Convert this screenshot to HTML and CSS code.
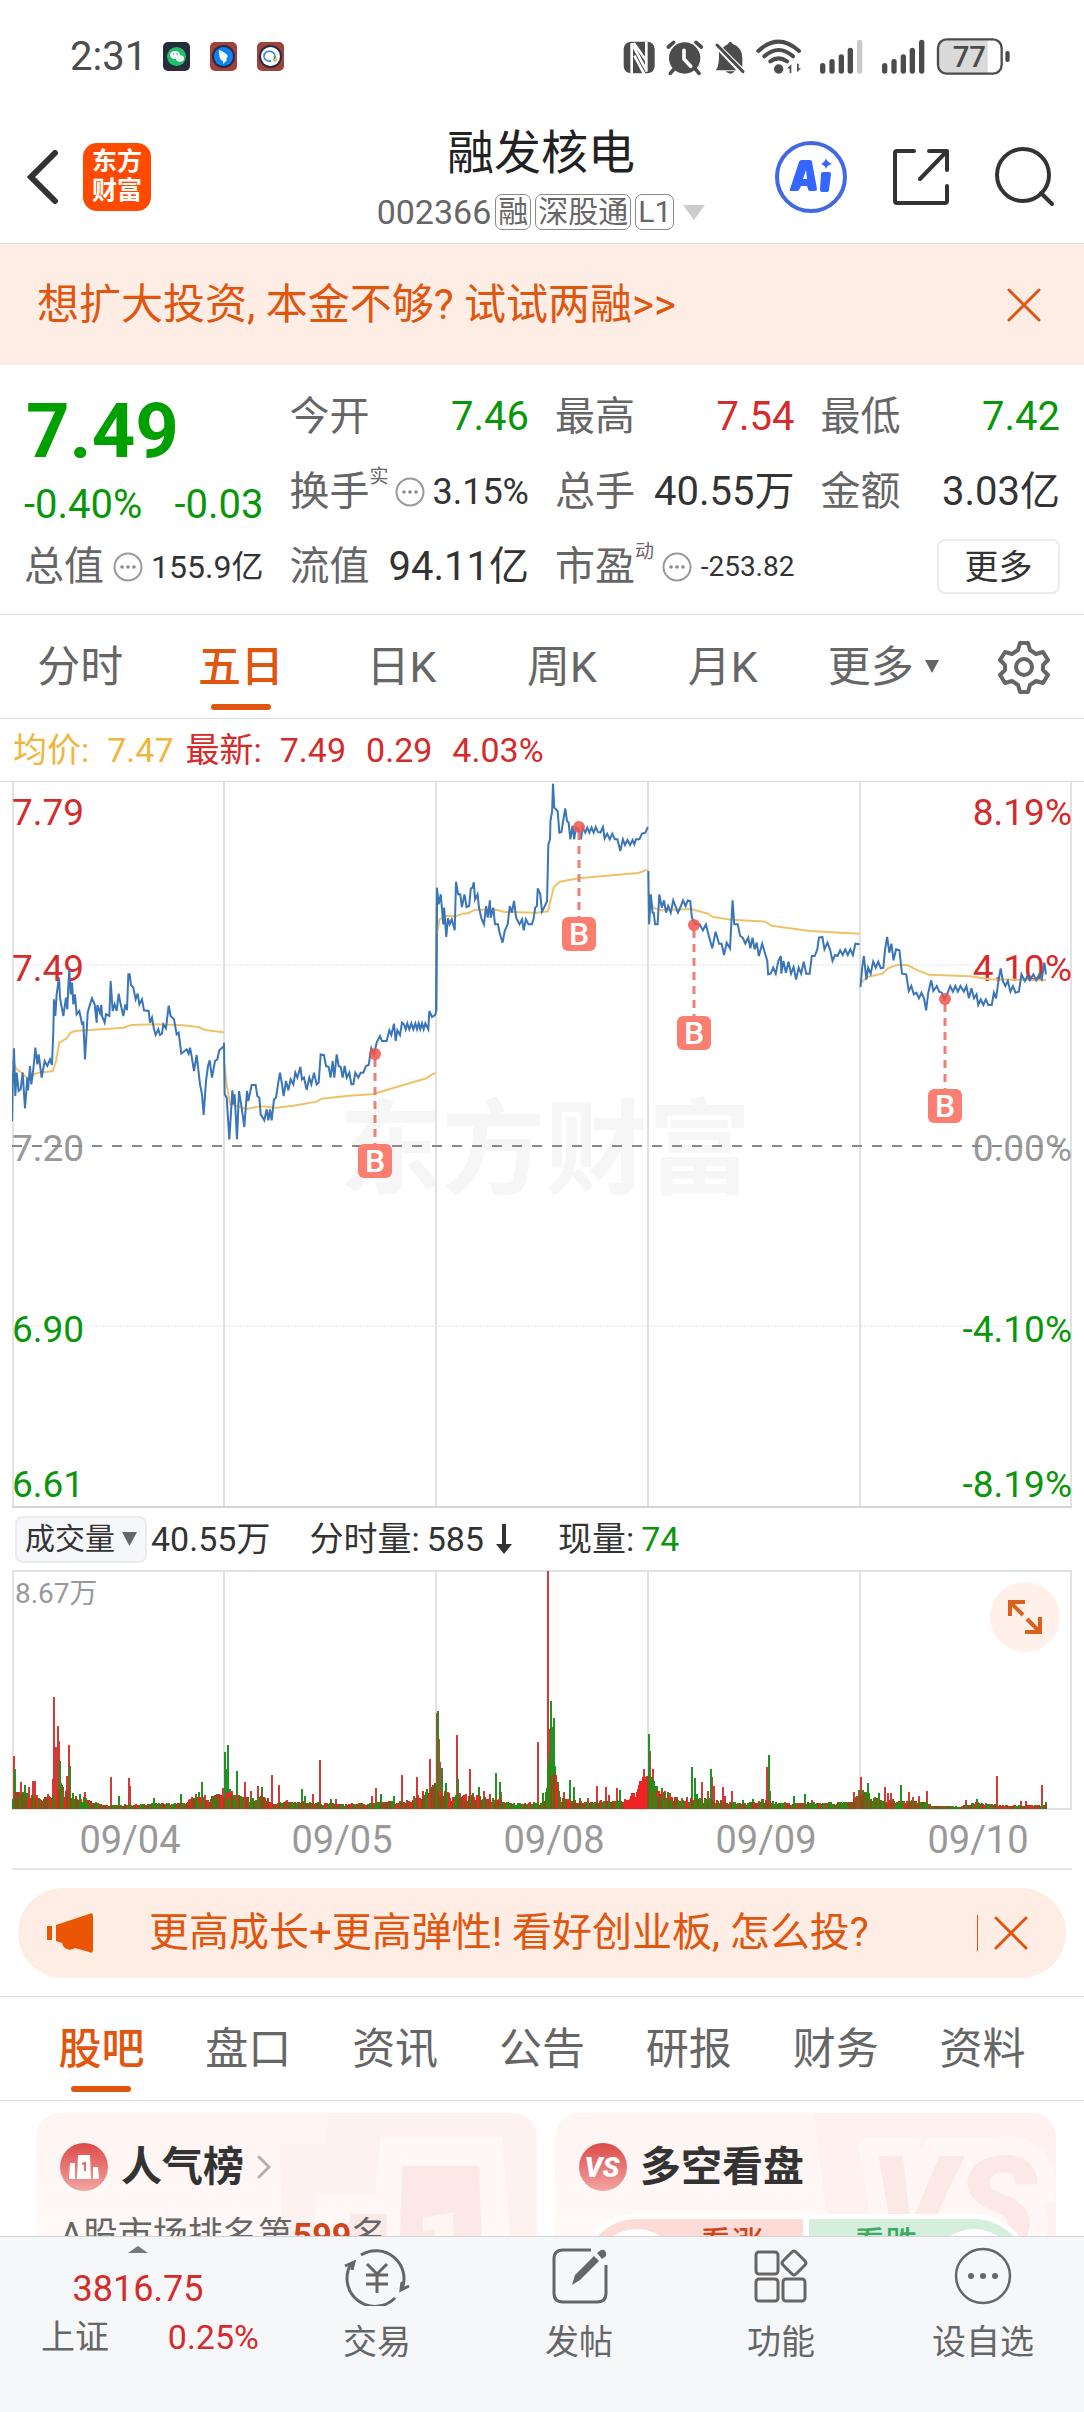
FILE: index.html
```html
<!DOCTYPE html>
<html lang="zh-CN">
<head>
<meta charset="utf-8">
<meta name="viewport" content="width=device-width, initial-scale=1">
<title>融发核电 002366</title>
<link rel="stylesheet" href="styles.css">
</head>
<body>
<div class="app">
  <div class="status">
    <span class="clock">2:31</span>
    <svg class="app-dot" viewBox="0 0 27 29"><rect width="27" height="29" rx="5" fill="#272c3b"/><circle cx="13.500" cy="14.500" r="9.500" fill="#20c06c"/><ellipse cx="12" cy="13" rx="5" ry="4" fill="#fff"/><ellipse cx="17" cy="16.500" rx="4" ry="3.200" fill="#eefaf3"/><circle cx="10.500" cy="12" r=".8" fill="#20c06c"/><circle cx="14" cy="12" r=".8" fill="#20c06c"/></svg>
    <svg class="app-dot" viewBox="0 0 27 29"><rect width="27" height="29" rx="5" fill="#9c443c"/><circle cx="13.500" cy="14.500" r="11.500" fill="#2b2c44"/><circle cx="13.500" cy="14.500" r="9.500" fill="#0f83f5"/><path d="M9 8c3 1 7 3 9 6l-2 3 1 1-4 4 0-3-2-1c-2-3-2-6-2-10z" fill="#fff"/></svg>
    <svg class="app-dot" viewBox="0 0 27 29"><rect width="27" height="29" rx="5" fill="#9c443c"/><circle cx="13.500" cy="14.500" r="11.500" fill="#2b2c44"/><circle cx="13.500" cy="14.500" r="9.500" fill="#fff"/><path d="M17 17a5.500 5 0 1 0-3 2l-4 0" fill="none" stroke="#2c86c8" stroke-width="1.500"/><path d="M17 14l2 2" stroke="#3cae54" stroke-width="2"/><path d="M16 17l2 2 2-2" fill="none" stroke="#e9a13a" stroke-width="1.500"/></svg>
    <svg class="indicators" viewBox="55 45 1170 126" fill="#4c4c4c">
      <rect x="60" y="62" width="93" height="95" rx="22"/>
      <path d="M84 66v92M88 74l40 74M128 62v90M92 104l30 56M90 66l40 56" stroke="#fff" stroke-width="8" fill="none"/>
      <circle cx="243" cy="111" r="47"/>
      <path d="M194 78l16-14M293 78l-16-14M210 145l-10 12M276 145l10 12" stroke="#4c4c4c" stroke-width="11" stroke-linecap="round"/>
      <path d="M241 88v26l20 22" fill="none" stroke="#fff" stroke-width="11" stroke-linecap="round"/>
      <path d="M358 80q8-8 14-10 8-16 16 0 26 8 28 40v28zM346 92l52 56h-62q12-14 10-56zM366 151h28q-14 14-28 0z"/>
      <path d="M340 72l78 80" stroke="#4c4c4c" stroke-width="9" stroke-linecap="round"/>
      <g fill="none" stroke="#4c4c4c" stroke-width="12" stroke-linecap="round"><path d="M464 90q60-56 122 0M482 106q43-38 86 0M500 121q25-18 50 0"/></g>
      <circle cx="525" cy="144" r="14"/><path d="M551 142l12-12v26h-5v-12zM592 142l-12 12v-26h5v14z"/>
      <rect x="649" y="126" width="16" height="32" rx="8"/><rect x="677" y="114" width="16" height="44" rx="8"/><rect x="705" y="100" width="16" height="58" rx="8"/><rect x="732" y="80" width="16" height="78" rx="8"/><rect x="760" y="56" width="16" height="102" rx="8" fill="#c9c9c9"/>
      <rect x="835" y="126" width="16" height="32" rx="8"/><rect x="863" y="114" width="16" height="44" rx="8"/><rect x="891" y="100" width="16" height="58" rx="8"/><rect x="918" y="80" width="16" height="78" rx="8"/><rect x="946" y="56" width="16" height="102" rx="8"/>
      <path d="M1028 58h124v98h-124q-22 0-22-22V80q0-22 22-22z" fill="#dadada"/>
      <rect x="1003" y="55" width="191" height="103" rx="26" fill="none" stroke="#4c4c4c" stroke-width="7"/>
      <rect x="1205" y="90" width="13" height="33" rx="6"/>
      <text x="1097" y="138" font-size="88" font-weight="500" text-anchor="middle">77</text>
    </svg>
  </div>

  <header class="topbar">
    <div class="topbar-left">
      <button class="icon-btn" aria-label="返回"><svg width="32" height="54" viewBox="0 0 32 54" fill="none" stroke="#333" stroke-width="6" stroke-linecap="round"><path d="M28 3L4 27l24 24"/></svg></button>
      <a class="logo" href="#">东方<br>财富</a>
    </div>
    <div class="title-block">
      <h1>融发核电</h1>
      <div class="code-line"><span>002366</span><span class="tag">融</span><span class="tag">深股通</span><span class="tag">L1</span><svg class="caret" width="22" height="15" viewBox="0 0 22 15"><path d="M0 0h22L11 15z" fill="#ccc"/></svg></div>
    </div>
    <div class="topbar-right">
      <button class="icon-btn" aria-label="AI"><svg width="72" height="72" viewBox="0 0 72 72"><circle cx="36" cy="36" r="34" fill="none" stroke="#4169e1" stroke-width="4"/><path d="M26 19h9q2 0 2 2l5 27q0 2-2 2h-5q-2 0-2-2l-1-3h-6l-2 4q0 1-2 1h-6q-2 0-1-2l9-27q1-2 2-2zM31 29l-3 9h4z" fill="#3566ff"/><path d="M48 31h6q2 0 2 2l-2 16q0 2-2 2h-5q-2 0-2-2l1-16q0-2 2-2zM51 17q1 4 6 6-5 1-6 5-1-4-5-5 4-2 5-6z" fill="#3566ff"/></svg></button>
      <button class="icon-btn" aria-label="分享"><svg width="58" height="58" viewBox="0 0 58 58" fill="none" stroke="#333" stroke-width="4" stroke-linecap="round" stroke-linejoin="round"><path d="M22 3H5q-2 0-2 2v48q0 2 2 2h48q2 0 2-2V38M37 3h18v19M55 3L28 31"/></svg></button>
      <button class="icon-btn" aria-label="搜索"><svg width="60" height="60" viewBox="0 0 60 60" fill="none" stroke="#333" stroke-width="4" stroke-linecap="round"><circle cx="28" cy="28" r="26"/><path d="M46 46l11 11"/></svg></button>
    </div>
  </header>

  <main class="scroll">
    <div class="banner"><a href="#">想扩大投资, 本金不够? 试试两融&gt;&gt;</a>
      <button class="icon-btn" aria-label="关闭"><svg width="34" height="34" viewBox="0 0 34 34" stroke="#e0560f" stroke-width="3" stroke-linecap="round"><path d="M2 2l30 30M32 2L2 32"/></svg></button>
    </div>

    <section class="quote">
      <div class="price"><strong>7.49</strong><div class="change"><span>-0.40%</span><span>-0.03</span></div></div>
      <div class="cell"><span>今开</span><b class="down">7.46</b></div>
      <div class="cell"><span>最高</span><b class="up">7.54</b></div>
      <div class="cell"><span>最低</span><b class="down">7.42</b></div>
      <div class="cell"><span>换手<sup>实</sup></span><svg class="info" viewBox="0 0 30 30"><use href="#more-dots"/></svg><b class="mid">3.15%</b></div>
      <div class="cell"><span>总手</span><b>40.55万</b></div>
      <div class="cell"><span>金额</span><b>3.03亿</b></div>
      <div class="cell"><span>总值</span><svg class="info" viewBox="0 0 30 30"><g id="more-dots"><circle cx="15" cy="15" r="13.500" fill="none" stroke="#999" stroke-width="2"/><circle cx="9" cy="15" r="1.800" fill="#888"/><circle cx="15" cy="15" r="1.800" fill="#888"/><circle cx="21" cy="15" r="1.800" fill="#888"/></g></svg><b class="small">155.9亿</b></div>
      <div class="cell"><span>流值</span><b>94.11亿</b></div>
      <div class="cell"><span>市盈<sup>动</sup></span><svg class="info" viewBox="0 0 30 30"><use href="#more-dots"/></svg><b class="tiny">-253.82</b></div>
      <div class="cell"><button class="more">更多</button></div>
    </section>

    <nav class="tabs periods">
      <button>分时</button><button class="on">五日</button><button>日K</button><button>周K</button><button>月K</button>
      <button>更多<svg width="14" height="13" viewBox="0 0 14 13"><path d="M0 0h14L7 13z" fill="#666"/></svg></button>
      <button class="gear" aria-label="设置"><svg width="52" height="54" viewBox="0 0 52 54" fill="none" stroke="#666" stroke-width="4" stroke-linejoin="round"><path d="M22 3h8l2 7 6 4 7-2 5 8-5 5v5l5 5-5 8-7-2-6 4-2 7h-8l-2-7-6-4-7 2-5-8 5-5v-5l-5-5 5-8 7 2 6-4z"/><circle cx="26" cy="27" r="8"/></svg></button>
    </nav>

    <div class="legend">
      <span class="avg"><span>均价:</span><span>7.47</span></span>
      <span class="last"><span>最新:</span><span>7.49</span></span><span class="up">0.29</span><span class="up">4.03%</span>
    </div>

    <div class="plot">
      <svg class="price-chart" viewBox="0 0 1060 726" role="img" aria-label="五日走势">
        <text class="watermark" x="533" y="404">东方财富</text>
        <path class="grid" d="M1 0V726M212 0V726M424 0V726M636 0V726M848 0V726M1059 0V726"/>
        <path class="dotted" d="M0 183H1060M0 544H1060"/>
        <path class="frame" d="M0 725H1060"/>
        <g class="axis up-fill"><text x="0" y="43">7.79</text><text x="0" y="199">7.49</text></g>
        <g class="axis flat-fill"><text x="0" y="379">7.20</text></g>
        <g class="axis down-fill"><text x="0" y="560">6.90</text><text x="0" y="715">6.61</text></g>
        <g class="axis end up-fill"><text x="1060" y="43">8.19%</text><text x="1060" y="199">4.10%</text></g>
        <g class="axis end flat-fill"><text x="1060" y="379">0.00%</text></g>
        <g class="axis end down-fill"><text x="1060" y="560">-4.10%</text><text x="1060" y="715">-8.19%</text></g>
        <path class="zero" d="M0 364H1060"/>
        <g transform="translate(-12 -71) scale(.33333)">
          <polyline class="mean" points="38,1050 50,1075 65,1085 80,1100 95,1098 106,1087 158,1080 168,1050 178,995 200,982 212,965 225,960 370,950 395,942 460,940 540,942 595,948 615,957 671,964"/>
          <polyline class="mean" points="673,1060 680,1120 690,1180 740,1194 780,1186 830,1190 880,1184 950,1172 965,1163 1040,1155 1120,1149 1160,1137 1210,1122 1280,1102 1296,1090 1307,1087"/>
          <polyline class="line" points="36,1230 38,1130 42,1012 46,1155 50,1085 56,1140 62,1135 68,1085 75,1192 82,1100 84,1138 90,1065 94,1120 100,1075 106,1010 112,1060 116,1030 125,1100 134,1050 142,1065 150,1045 156,1062 160,960 162,865 166,915 170,850 177,800 180,860 190,915 198,860 202,895 205,825 208,775 212,850 216,815 220,880 225,850 230,910 238,900 246,938 250,935 255,1045 260,960 263,905 270,880 276,862 284,880 290,935 292,882 300,905 304,882 306,915 314,935 318,910 328,915 332,810 338,900 344,880 350,900 356,848 362,880 370,915 376,880 381,898 385,790 389,790 393,822 400,830 407,865 413,848 418,880 426,865 432,898 446,900 450,935 456,920 462,955 467,972 475,955 480,972 486,968 490,940 498,952 506,884 512,915 522,925 530,970 536,965 544,1028 560,1015 566,1028 570,1010 574,1030 582,1080 590,1032 600,1120 606,1150 611,1212 618,1110 624,1065 629,1048 636,1100 645,1050 652,1045 658,1018 672,1005 672,995 674,1150 680,1160 688,1285 697,1138 701,1180 704,1150 711,1285 717,1140 725,1190 733,1248 741,1140 745,1170 755,1122 767,1122 772,1155 778,1160 782,1210 793,1228 800,1195 805,1228 810,1195 815,1228 822,1165 828,1160 834,1120 840,1085 846,1120 851,1155 858,1110 865,1138 872,1105 880,1120 886,1085 892,1100 901,1068 906,1105 912,1100 920,1136 928,1100 934,1120 942,1085 950,1120 956,1115 962,1030 972,1032 978,1065 986,1068 992,1100 998,1050 1003,1100 1010,1030 1016,1065 1022,1068 1028,1100 1034,1065 1040,1100 1048,1085 1054,1120 1060,1120 1066,1085 1075,1100 1082,1085 1090,1085 1098,1065 1106,1062 1114,1012 1122,1030 1130,995 1140,975 1146,990 1160,990 1168,958 1174,972 1182,938 1187,990 1192,958 1200,972 1206,935 1212,940 1217,955 1222,937 1228,955 1234,937 1240,955 1246,937 1251,955 1256,937 1261,955 1266,937 1271,955 1276,937 1285,955 1288,900 1296,918 1305,912 1309,900 1311,532"/>
        </g>
        <g transform="translate(408 -21) scale(.42354 .33333)">
          <polyline class="mean" points="40,520 46,475 60,465 85,466 100,458 115,456 130,446 180,446 200,453 275,455 302,451 308,420 316,378 330,362 375,352 440,344 515,336 538,326"/>
          <polyline class="mean" points="541,400 550,440 570,448 640,444 680,458 692,468 735,476 815,482 830,494 920,510 1038,518"/>
          <polyline class="mean" points="1041,665 1056,648 1092,638 1105,622 1125,612 1150,612 1175,628 1202,641 1300,646 1345,655 1478,657"/>
          <polyline class="line" points="38,750 40,380 44,430 49,400 55,490 57,440 62,528 66,472 70,490 75,475 82,508 85,362 90,400 95,400 99,438 105,400 110,438 116,435 120,382 124,380 127,364 130,415 136,400 139,438 145,472 151,490 156,435 160,470 165,418 167,470 173,440 177,490 184,490 188,515 195,545 200,510 207,490 212,435 217,455 222,420 227,470 235,490 241,475 245,508 250,475 256,490 264,490 268,475 272,440 276,435 278,382 284,400 288,452 295,435 300,420 303,250 307,235 308,180 312,150 314,68 317,140 325,150 329,215 334,213 338,180 343,142 347,180 351,185 355,235 360,195 364,235 368,200 374,205 380,235 384,200 390,215 395,200 400,215 405,200 410,215 415,198 420,213 426,215 432,198 436,232 442,218 448,235 454,218 460,235 466,235 473,270 479,235 484,252 490,237 496,252 502,237 506,250 510,235 518,235 524,218 532,215 538,198"/>
          <polyline class="line" points="539,330 541,490 545,400 549,455 552,455 555,490 561,490 565,400 571,440 576,418 581,455 586,435 592,455 598,418 604,438 609,455 615,438 621,418 627,435 632,418 638,420 642,470 650,490 660,490 668,508 675,490 682,525 690,562 698,512 706,548 712,548 718,582 724,545 732,562 735,490 738,418 742,490 750,490 756,525 762,530 768,548 775,530 780,562 785,530 790,565 795,545 800,585 808,548 813,570 820,600 822,640 828,638 834,620 840,638 846,600 852,585 853,638 858,600 864,635 870,602 876,638 882,618 888,656 894,620 900,638 906,602 912,638 920,638 925,585 932,585 938,565 942,530 950,528 955,565 962,545 968,565 974,600 980,582 986,585 992,568 998,582 1004,565 1010,582 1016,565 1022,582 1028,548 1038,550"/>
          <polyline class="line" points="1040,678 1044,620 1048,585 1054,656 1058,620 1064,638 1070,602 1076,620 1082,602 1088,622 1094,620 1098,565 1103,528 1108,575 1113,548 1118,598 1124,565 1132,568 1138,638 1148,640 1154,690 1160,675 1166,700 1172,695 1178,712 1184,695 1190,712 1195,748 1200,695 1207,658 1212,690 1220,675 1226,692 1232,695 1238,715 1246,695 1252,675 1258,692 1264,675 1270,692 1276,675 1284,692 1290,675 1296,712 1302,682 1308,712 1314,700 1318,732 1324,715 1330,732 1336,715 1342,732 1350,732 1355,695 1360,712 1366,658 1371,622 1376,660 1382,675 1388,660 1394,692 1400,675 1406,695 1414,692 1420,640 1428,660 1434,645 1440,658 1448,640 1455,658 1462,640 1468,655 1474,605 1478,640"/>
        </g>
        <path class="marker-stem" d="M363 277V363M567 50V136M682 148V235M933 222V308"/>
        <g class="marker-dot"><circle cx="363" cy="272" r="6"/><circle cx="567" cy="45" r="6"/><circle cx="682" cy="143" r="6"/><circle cx="933" cy="217" r="6"/></g>
        <g class="marker-box"><rect x="346" y="362" width="34" height="34" rx="6"/><rect x="550" y="135" width="34" height="34" rx="6"/><rect x="665" y="234" width="34" height="34" rx="6"/><rect x="916" y="307" width="34" height="34" rx="6"/></g>
        <g class="marker-text"><text x="363" y="390">B</text><text x="567" y="163">B</text><text x="682" y="262">B</text><text x="933" y="335">B</text></g>
      </svg>

      <div class="vol-head">
        <label class="picker"><select aria-label="指标"><option>成交量</option></select><svg width="15" height="14" viewBox="0 0 15 14"><path d="M0 0h15L7.500 14z" fill="#666"/></svg></label>
        <span class="total">40.55万</span>
        <span class="pair">分时量:<span>585</span><svg width="16" height="30" viewBox="0 0 16 30"><path d="M8 0v22" stroke="#333" stroke-width="4"/><path d="M0 20h16L8 30z" fill="#333"/></svg></span>
        <span class="pair">现量:<span class="down">74</span></span>
      </div>

      <div class="volume">
        <svg class="vol-chart" id="volume" viewBox="0 0 1060 240" role="img" aria-label="成交量">
          <path class="grid" d="M1 0V240M212 0V240M424 0V240M636 0V240M848 0V240M1059 0V240M0 1H1060M0 239H1060"/>
          <text class="vol-max" x="3" y="33">8.67万</text>
        </svg>
        <button class="expand" aria-label="全屏"><svg width="34" height="34" viewBox="0 0 34 34" fill="none" stroke="#d9611e" stroke-width="4"><path d="M2 16V2h15M2 2l13 13M19 19l12 12M32 17v15H17"/></svg></button>
      </div>
    </div>
    <div class="dates"><span>09/04</span><span>09/05</span><span>09/08</span><span>09/09</span><span>09/10</span></div>

    <div class="promo">
      <svg width="46" height="40" viewBox="0 0 46 40" fill="#ea5504"><path d="M0 13h5v14H0zM9 12L42 1q4-2 4 2v34q0 4-4 2l-14-4q-4 3-8 1-4-1-5-6l-6-2z"/></svg>
      <a href="#">更高成长+更高弹性! 看好创业板, 怎么投?</a>
      <i></i>
      <button class="icon-btn" aria-label="关闭"><svg width="34" height="34" viewBox="0 0 34 34" stroke="#e0560f" stroke-width="3" stroke-linecap="round"><path d="M2 2l30 30M32 2L2 32"/></svg></button>
    </div>

    <nav class="tabs sections">
      <button class="on">股吧</button><button>盘口</button><button>资讯</button><button>公告</button><button>研报</button><button>财务</button><button>资料</button>
    </nav>

    <section class="cards">
      <article class="card">
        <svg class="card-art" viewBox="108 37 1503 371" aria-hidden="true"><path d="M840 130h135l10-93h626v371H845z" fill="#fef2f0"/><path d="M1142 108h364l24 300H940l8-126h177z" fill="#fff8f6"/><path d="M1207 195h230l8 213h-245zM1052 340h108v68h-115z" fill="#fce8e6"/><path d="M1268 350l92-15v73h-55v-23l-37 7z" fill="#fff5f3"/></svg>
        <h2><svg class="badge" viewBox="0 0 48 48"><defs><linearGradient id="red" x2="0" y2="1"><stop offset="0" stop-color="#dc4a48"/><stop offset="1" stop-color="#f2a5a2"/></linearGradient></defs><circle cx="24" cy="24" r="24" fill="url(#red)"/><path d="M10 20h5v16H9zM18 12h12l1 24H17zM33 24h5l1 12h-6z" fill="#fff"/><path d="M22 21l3-1v8" fill="none" stroke="#e26a67" stroke-width="2"/></svg>人气榜<svg width="14" height="24" viewBox="0 0 14 24" fill="none" stroke="#b5b0af" stroke-width="3" stroke-linecap="round"><path d="M2 2l10 10L2 22"/></svg></h2>
        <p>A股市场排名第<strong>599</strong>名</p>
      </article>
      <article class="card">
        <svg class="card-art" viewBox="45 37 1503 371" aria-hidden="true"><path d="M820 37h728v371H870z" fill="#fef1ef"/><text class="vs-art" x="990" y="450">VS</text></svg>
        <h2><svg class="badge" viewBox="0 0 48 48"><circle cx="24" cy="24" r="24" fill="url(#red)"/><text class="vs" x="23" y="34">VS</text></svg>多空看盘</h2>
        <div class="vote"><button class="bull"><i></i>看涨</button><button class="bear">看跌<i></i></button></div>
      </article>
    </section>
  </main>

  <footer class="dock">
    <a class="index" href="#"><svg width="20" height="7" viewBox="0 0 20 7"><path d="M0 7h20L10 0z" fill="#77777b"/></svg><b>3816.75</b><span><em>上证</em><b>0.25%</b></span></a>
    <a href="#"><svg viewBox="0 0 66 60" width="66" height="60" fill="none" stroke="#666" stroke-width="3"><path d="M17 9A28 28 0 0 1 58 43M51 52A28 28 0 0 1 7 18M1 20l9-4-2 8M65 40l-8 4 1-8"/><path d="M23 18l10 10 10-10M33 28v19M22 29h22M22 38h22"/></svg>交易</a>
    <a href="#"><svg viewBox="0 0 60 60" width="60" height="60" fill="none" stroke="#666" stroke-width="3"><path d="M42 4H14q-9 0-9 9v34q0 9 9 9h34q9 0 9-9V19"/><path d="M23 39l3-10L45 10l5 5-19 19z" fill="#666" stroke="none"/><path d="M48 7l4-3q4-1 5 3v3l-4 3z" fill="#666" stroke="none"/></svg>发帖</a>
    <a href="#"><svg viewBox="0 0 60 60" width="60" height="60" fill="none" stroke="#666" stroke-width="3" stroke-linejoin="round"><rect x="5" y="6" width="22" height="22" rx="3"/><rect x="5" y="33" width="22" height="22" rx="3"/><rect x="32" y="33" width="22" height="22" rx="3"/><path d="M41 6q2-2 4 0l9 9q2 2 0 4l-9 9q-2 2-4 0l-9-9q-2-2 0-4z"/></svg>功能</a>
    <a href="#"><svg viewBox="0 0 60 60" width="60" height="60" fill="#666"><circle cx="30" cy="30" r="27" fill="none" stroke="#666" stroke-width="2.500"/><circle cx="18" cy="30" r="3"/><circle cx="30" cy="30" r="3"/><circle cx="42" cy="30" r="3"/></svg>设自选</a>
  </footer>
</div>
<script src="volume.js"></script>
</body>
</html>
```
FILE: styles.css
```css
* { box-sizing: border-box; margin: 0; padding: 0; }
body { font-family: Roboto, "Noto Sans CJK SC", sans-serif; color: #333; background: #fff; }
button, select { font: inherit; color: inherit; background: none; border: 0; }
a { color: inherit; text-decoration: none; }
svg { flex: none; }
.app { height: 100vh; display: flex; flex-direction: column; overflow: hidden; }
.up { color: #d42b2b; }
.down { color: #0a960a; }

.status { flex: none; height: 110px; padding: 3px 72px 0 70px; display: flex; align-items: center; gap: 20px; color: #4c4c4c; }
.clock { margin-right: -4px; font-size: 40px; line-height: 48px; }
.app-dot { width: 27px; height: 29px; }
.indicators { width: 390px; height: 42px; margin-left: auto; }

.topbar { flex: none; min-height: 134px; border-bottom: 1px solid #d9d9d9; padding: 0 29px 0 27px; display: grid; grid-template-columns: 1fr auto 1fr; align-items: center; }
.icon-btn { display: flex; }
.topbar-left { display: flex; align-items: center; gap: 24px; }
.logo { width: 68px; height: 68px; border-radius: 14px; background: #ff4a00; color: #fff; font-size: 25px; font-weight: 700; line-height: 29px; padding: 4px 0; text-align: center; }
.title-block { display: flex; flex-direction: column; align-items: center; gap: 11px; }
.title-block h1 { font-size: 47px; font-weight: 400; line-height: 60px; color: #222; }
.code-line { display: flex; align-items: center; gap: 4px; font-size: 34px; line-height: 36px; color: #666; }
.tag { height: 36px; padding: 0 2px; border: 1px solid #888; border-radius: 7px; font-size: 30px; line-height: 34px; }
.caret { margin-left: 5px; }
.topbar-right { display: flex; align-items: center; justify-content: flex-end; gap: 45px; }

.scroll { flex: 1; min-height: 0; overflow-y: auto; scrollbar-width: none; }
.banner { min-height: 121px; padding: 0 43px 0 37px; background: #fdede4; color: #e0560f; font-size: 42px; line-height: 60px; display: flex; align-items: center; justify-content: space-between; }

.quote { padding: 14px 24px 10px; border-bottom: 1px solid #d9d9d9; display: grid; grid-template-columns: repeat(4, 1fr); grid-template-rows: repeat(3, 75px); column-gap: 26px; }
.price { grid-row: span 2; padding-top: 12px; color: #00a000; }
.price strong { display: block; padding-left: 2px; font-size: 76px; line-height: 80px; }
.change { display: flex; justify-content: space-between; font-size: 40px; line-height: 68px; color: #0a960a; }
.cell { display: flex; align-items: center; justify-content: space-between; font-size: 40px; line-height: 48px; color: #666; white-space: nowrap; }
.cell b { font-weight: 400; }
.cell b:not(.up):not(.down) { color: #333; }
.cell .mid { font-size: 36px; }
.cell .small { font-size: 32px; }
.cell .tiny { font-size: 28px; }
.cell sup { font-size: 19px; line-height: 20px; vertical-align: 22px; }
.info { width: 30px; height: 30px; }
.more { margin-left: auto; width: 123px; height: 55px; border: 2px solid #ebebeb; border-radius: 8px; font-size: 34px; color: #333; }

.tabs { display: grid; border-bottom: 1px solid #d9d9d9; color: #666; }
.tabs button { position: relative; height: 103px; font-size: 43px; line-height: 60px; display: flex; align-items: center; justify-content: center; gap: 11px; }
.tabs .on { color: #e0560f; font-weight: 500; }
.tabs .on::after { content: ""; position: absolute; left: 50%; bottom: 8px; width: 60px; height: 6px; margin-left: -30px; border-radius: 3px; background: #e0560f; }
.periods { grid-template-columns: repeat(6, 4fr) 3fr; }
.sections { grid-template-columns: repeat(7, 1fr); padding: 0 28px; border-top: 1px solid #d9d9d9; }

.legend { height: 63px; padding: 0 13px; border-bottom: 1px solid #d9d9d9; display: flex; align-items: center; gap: 20px; font-size: 34px; line-height: 48px; }
.legend > span { display: flex; gap: 18px; }
.legend .avg { color: #efb63f; margin-right: -8px; }
.legend .last { color: #d42b2b; }

.plot { padding: 0 12px; }
.plot svg { display: block; }
.price-chart, .vol-chart { width: 100%; height: auto; }
.grid { fill: none; stroke: #e2e2e2; stroke-width: 2; }
.dotted { fill: none; stroke: #e4e4e4; stroke-width: 1; stroke-dasharray: 2 1; }
.frame { stroke: #d4d4d4; stroke-width: 2; }
.zero { stroke: #888; stroke-width: 2; stroke-dasharray: 10 10; }
.line { fill: none; stroke: #3a75b8; stroke-width: 2; vector-effect: non-scaling-stroke; }
.mean { fill: none; stroke: #efc269; stroke-width: 2; vector-effect: non-scaling-stroke; }
.axis { font-size: 37px; }
.end { text-anchor: end; }
.up-fill { fill: #d42b2b; }
.down-fill { fill: #0a960a; }
.flat-fill { fill: #999; }
.watermark { font-size: 103px; font-weight: 700; text-anchor: middle; fill: #f6f6f6; }
.marker-stem { stroke: #ec8074; stroke-width: 3; stroke-dasharray: 8 6; }
.marker-dot { fill: #f0544a; opacity: .85; }
.marker-box { fill: #fa7f70; }
.marker-text { fill: #fff; font-size: 32px; font-weight: 500; text-anchor: middle; }

.vol-head { height: 62px; padding-left: 3px; display: flex; align-items: center; font-size: 34px; line-height: 46px; }
.picker { height: 47px; padding: 0 8px; display: flex; align-items: center; gap: 7px; border: 2px solid #ececf0; border-radius: 8px; background: #f6f7f9; font-size: 30px; }
.picker select { width: 90px; appearance: none; }
.total { margin-left: 4px; margin-right: 39px; }
.pair { display: flex; align-items: center; margin-right: 46px; }
.pair span { margin-left: 7px; }
.pair svg { margin-left: 12px; }
.volume { position: relative; }
.vol-max { font-size: 28px; fill: #999; }
.expand { position: absolute; top: 12px; right: 12px; width: 70px; height: 70px; border-radius: 50%; background: #fff1ea; display: flex; align-items: center; justify-content: center; }
.dates { margin: 0 12px; border-bottom: 2px solid #e5e5e5; display: grid; grid-template-columns: repeat(5, 1fr); text-align: center; font-size: 38px; line-height: 58px; color: #999; }
.dates span { padding: 2px 0 0 24px; line-height: 56px; }

.promo { margin: 18px; height: 90px; padding: 0 38px 0 29px; border-radius: 45px; background: #fdede4; color: #e0560f; display: flex; align-items: center; font-size: 40px; line-height: 56px; }
.promo a { margin-left: 56px; margin-right: auto; }
.promo i { width: 1px; height: 36px; margin-right: 16px; background: #e0560f; }

.cards { padding: 12px 28px 28px 36px; display: grid; grid-template-columns: 1fr 1fr; gap: 18px; }
.card { position: relative; height: 250px; padding: 26px 24px; border-radius: 24px; overflow: hidden; background: linear-gradient(#fff5f3, #fffaf8 60%); }
.card-art { position: absolute; top: 0; left: 0; width: 100%; }
.card h2 { position: relative; display: flex; align-items: center; gap: 13px; font-size: 41px; font-weight: 700; line-height: 56px; }
.badge { width: 48px; height: 48px; }
.card p { position: relative; margin-top: 12px; font-size: 35px; line-height: 56px; color: #666; }
.card p strong { color: #d1451b; font-size: 34px; }
.vs { font-size: 28px; font-style: italic; font-weight: 900; text-anchor: middle; fill: #fff; }
.vs-art { font-size: 400px; font-style: italic; font-weight: 900; fill: #fce8e6; stroke: #fff7f5; stroke-width: 110px; paint-order: stroke; }
.vote { position: relative; margin-top: 19px; border: 5px solid #fff; border-radius: 58px; overflow: hidden; display: grid; grid-template-columns: 1fr 1fr; gap: 6px; background: #fff; }
.vote button { height: 106px; padding: 6px 10px 10px; display: flex; justify-content: space-between; font-size: 32px; line-height: 36px; font-weight: 500; }
.vote i { width: 86px; height: 86px; margin-top: 4px; border-radius: 50%; background: #fff; }
.bull { background: #fddcd8; color: #d1451b; }
.bear { background: #d6efdc; color: #3eaa66; }
.vote .bull { padding-right: 39px; }
.vote .bear { padding-left: 45px; }

.dock { flex: none; height: 176px; border-top: 1px solid #d0d4d8; background: #f6f7f9; display: grid; grid-template-columns: 276fr repeat(4, 202fr); color: #666; font-size: 34px; line-height: 48px; }
.dock a { display: flex; flex-direction: column; align-items: center; gap: 12px; padding-top: 9px; }
.dock .index { gap: 0; }
.dock b { font-weight: 400; color: #d42b2b; }
.dock em { font-style: normal; }
.index > b { margin-top: 12px; font-size: 36px; }
.index > span { width: 100%; padding: 0 17px 0 41px; display: flex; justify-content: space-between; }
```
FILE: volume.js
```js
// Minute volume: [x, height] of the taller bars, by direction.
const rise = [[2,53],[9,27],[17,22],[21,28],[23,28],[36,15],[41,30],[42,112],[44,62],[46,83],[47,68],[55,33],[57,64],[73,17],[99,32],[117,31],[118,23],[180,12],[184,15],[193,14],[206,12],[211,21],[220,18],[229,13],[233,27],[239,18],[246,23],[260,34],[267,24],[275,9],[301,15],[308,49],[324,10],[360,13],[364,21],[390,34],[402,13],[405,32],[414,12],[418,50],[420,22],[423,25],[425,96],[427,70],[428,47],[436,17],[445,74],[448,16],[458,40],[472,18],[478,15],[489,17],[526,67],[536,238],[538,80],[552,17],[576,11],[585,23],[594,22],[597,14],[605,21],[632,40],[635,33],[638,58],[641,40],[653,17],[658,16],[670,11],[690,27],[696,18],[700,32],[702,23],[711,22],[713,13],[720,18],[755,42],[758,18],[800,9],[842,17],[849,32],[873,22],[876,16],[879,16],[897,17],[901,12],[907,13],[915,18],[954,9],[985,33],[1009,8],[1014,8],[1030,24]];
const fall = [[3,40],[13,24],[25,14],[48,48],[49,26],[51,17],[58,43],[61,16],[64,13],[68,15],[107,13],[142,11],[169,15],[187,17],[190,27],[213,57],[215,40],[216,64],[218,20],[225,38],[250,22],[290,20],[293,13],[319,10],[369,15],[382,13],[426,98],[430,41],[434,26],[446,30],[461,16],[467,22],[484,36],[488,27],[531,16],[539,108],[540,82],[542,91],[543,43],[546,27],[547,18],[558,29],[562,22],[568,11],[608,19],[637,75],[642,28],[645,23],[650,21],[665,12],[675,12],[680,42],[683,31],[685,15],[699,40],[731,9],[741,10],[757,54],[782,13],[793,15],[845,13],[847,19],[851,19],[856,26],[867,16],[881,10],[889,24],[965,10],[1034,7]];
// Typical level between the peaks.
const level = [[0,18],[30,10],[40,12],[50,22],[65,14],[80,6],[95,3],[130,4],[170,5],[185,11],[195,10],[210,17],[225,13],[245,9],[250,15],[260,6],[300,6],[330,4],[350,5],[400,8],[425,25],[440,12],[460,13],[480,10],[500,5],[525,6],[533,7],[538,60],[542,50],[548,11],[560,7],[610,7],[618,11],[632,32],[636,36],[645,21],[665,9],[695,9],[720,7],[735,5],[755,9],[765,5],[840,6],[850,17],[870,7],[890,7],[910,9],[920,2],[950,2],[965,6],[985,3],[1035,3]];
const BASE = 239;
const svg = document.getElementById('volume');
let seed = 7;
const random = () => (seed = (seed * 16807) % 2147483647) / 2147483647;

function draw(bars, color, width) {
  const path = document.createElementNS('http://www.w3.org/2000/svg', 'path');
  path.setAttribute('d', bars.map(([x, h]) => `M${x} ${BASE}v${-h}`).join(''));
  path.setAttribute('stroke', color);
  path.setAttribute('stroke-width', width);
  svg.appendChild(path);
}

const red = [], green = [], mixed = [];
let k = 0;
for (let x = 1; x < 1035; x++) {
  while (x > level[k + 1][0]) k++;
  const [x0, h0] = level[k], [x1, h1] = level[k + 1];
  const h = Math.round((h0 + (h1 - h0) * (x - x0) / (x1 - x0)) * (0.5 + 0.6 * random())) + 1;
  const ramp = x > 612 && x < 635;
  const r = random();
  (ramp || r < 0.42 ? red : r < 0.68 ? mixed : green).push([x, h]);
}
draw(rise, '#d23a38', 2);
draw(fall, '#1f9322', 2);
draw(red, '#ee2424', 2);
draw(green, '#2a8a14', 2);
draw(mixed, '#85501a', 2);
```
